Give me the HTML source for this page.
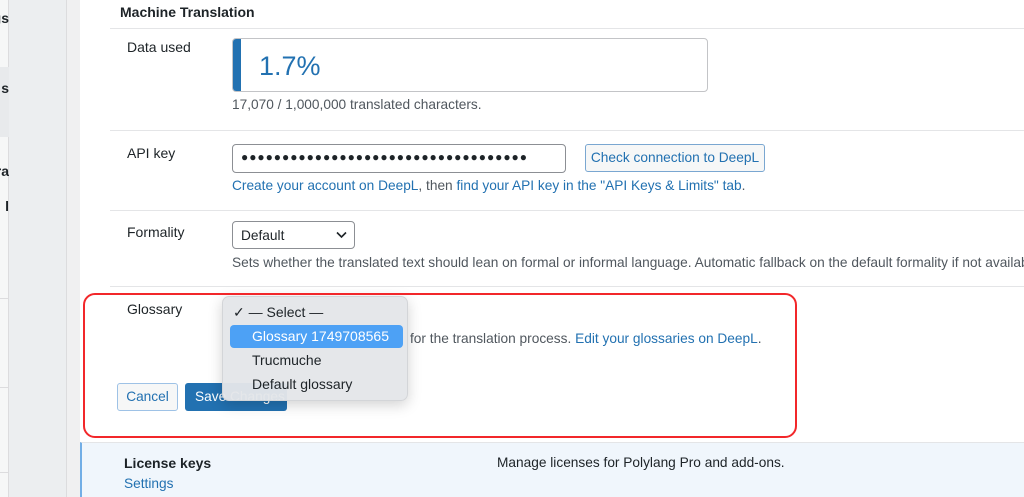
<!DOCTYPE html>
<html><head><meta charset="utf-8"><style>
*{margin:0;padding:0;box-sizing:border-box}
body{width:1024px;height:497px;overflow:hidden;background:#fff;font-family:"Liberation Sans",sans-serif;font-size:13.7px;color:#1d2327;position:relative}
.a{position:absolute;white-space:nowrap}
.link{color:#2271b1}
.hr{position:absolute;left:110px;right:0;height:1px;background:#e4e5e7}
</style></head><body>
<div class="a" style="left:0;top:0;width:9px;height:497px;background:#f6f7f7;border-right:1px solid #dcdcde"></div>
<div class="a" style="left:0;top:67px;width:9px;height:70px;background:#e8eaec"></div>
<div class="a" style="left:0;top:10px;font-weight:bold;font-size:14px;width:9px;overflow:hidden;direction:rtl">gs</div>
<div class="a" style="left:0;top:80px;font-weight:bold;font-size:14px;width:9px;overflow:hidden;direction:rtl">s</div>
<div class="a" style="left:0;top:163px;font-weight:bold;font-size:14px;width:9px;overflow:hidden;direction:rtl">ra</div>
<div class="a" style="left:0;top:198px;font-weight:bold;font-size:14px;width:9px;overflow:hidden;direction:rtl">l</div>
<div class="a" style="left:0;top:298px;width:9px;height:1px;background:#dcdcde"></div>
<div class="a" style="left:0;top:387px;width:9px;height:1px;background:#dcdcde"></div>
<div class="a" style="left:0;top:472px;width:9px;height:1px;background:#dcdcde"></div>
<div class="a" style="left:9px;top:0;width:57px;height:497px;background:#eceef0"></div>
<div class="a" style="left:66px;top:0;width:14px;height:497px;background:#f0f0f1;border-left:1px solid #dcdcde"></div>

<div class="a" style="left:120px;top:4px;font-weight:bold;font-size:14px">Machine Translation</div>
<div class="hr" style="top:28px"></div>
<div class="a" style="left:127px;top:39px;font-size:14px">Data used</div>
<div class="a" style="left:232px;top:38px;width:476px;height:54px;border:1px solid #c3c4c7;border-radius:4px;overflow:hidden">
<div style="position:absolute;left:0;top:0;width:8px;height:100%;background:#2271b1"></div>
<div style="position:absolute;left:26px;top:12px;font-size:27px;color:#2271b1">1.7%</div></div>
<div class="a" style="left:232px;top:97px;color:#50575e">17,070 / 1,000,000 translated characters.</div>
<div class="hr" style="top:130px"></div>

<div class="a" style="left:127px;top:145px;font-size:14px">API key</div>
<div class="a" style="left:232px;top:144px;width:334px;height:29px;border:1px solid #8c8f94;border-radius:4px;font-size:12px;padding:5px 8px;letter-spacing:0.95px">●●●●●●●●●●●●●●●●●●●●●●●●●●●●●●●●●●●</div>
<div class="a" style="left:585px;top:144px;width:180px;height:28px;border:1px solid #7aa7d1;border-radius:3px;background:#f6f7f7;color:#2271b1;text-align:center;line-height:26px">Check connection to DeepL</div>
<div class="a link" style="left:232px;top:178px">Create your account on DeepL<span style="color:#50575e">, then </span>find your API key in the "API Keys &amp; Limits" tab<span style="color:#50575e">.</span></div>
<div class="hr" style="top:210px"></div>

<div class="a" style="left:127px;top:224px;font-size:14px">Formality</div>
<div class="a" style="left:232px;top:221px;width:123px;height:28px;border:1px solid #8c8f94;border-radius:4px;padding:6px 8px">Default
<svg style="position:absolute;right:7px;top:9px" width="11" height="8" viewBox="0 0 11 8"><path d="M1 1.5l4.5 4.5L10 1.5" fill="none" stroke="#1d2327" stroke-width="1.6"/></svg></div>
<div class="a" style="left:232px;top:255px;color:#50575e">Sets whether the translated text should lean on formal or informal language. Automatic fallback on the default formality if not available.</div>
<div class="hr" style="top:286px"></div>

<div class="a" style="left:127px;top:301px;font-size:14px">Glossary</div>
<div class="a" style="left:410px;top:331px;color:#50575e">for the translation process. <span class="link">Edit your glossaries on DeepL</span>.</div>
<div class="a" style="left:117px;top:383px;width:61px;height:28px;border:1px solid #9ec2e6;border-radius:3px;background:#f6f7f7;color:#2271b1;text-align:center;line-height:26px">Cancel</div>
<div class="a" style="left:185px;top:383px;width:102px;height:28px;border-radius:3px;background:#2271b1;color:#fff;padding-left:10px;line-height:28px">Save Changes</div>

<div class="a" style="left:222px;top:296px;width:186px;height:105px;background:rgba(228,230,233,0.96);border:1px solid #d3d5d8;border-radius:7px;box-shadow:0 4px 14px rgba(0,0,0,0.18);font-size:14px">
<div style="position:absolute;left:10px;top:7px">✓ — Select —</div>
<div style="position:absolute;left:7px;top:28px;width:173px;height:23px;background:#4da1f5;border-radius:4px;color:#fff;padding-left:22px;line-height:23px">Glossary 1749708565</div>
<div style="position:absolute;left:29px;top:55px">Trucmuche</div>
<div style="position:absolute;left:29px;top:79px">Default glossary</div>
</div>

<div class="a" style="left:83px;top:293px;width:714px;height:145px;border:2px solid #f2272a;border-radius:12px"></div>

<div class="a" style="left:80px;top:442px;width:944px;height:55px;background:#f0f6fc;border-left:2px solid #72aee6;border-top:1px solid #e4e5e7"></div>
<div class="a" style="left:124px;top:455px;font-weight:bold;font-size:14px">License keys</div>
<div class="a link" style="left:124px;top:476px">Settings</div>
<div class="a" style="left:497px;top:455px">Manage licenses for Polylang Pro and add-ons.</div>
</body></html>
